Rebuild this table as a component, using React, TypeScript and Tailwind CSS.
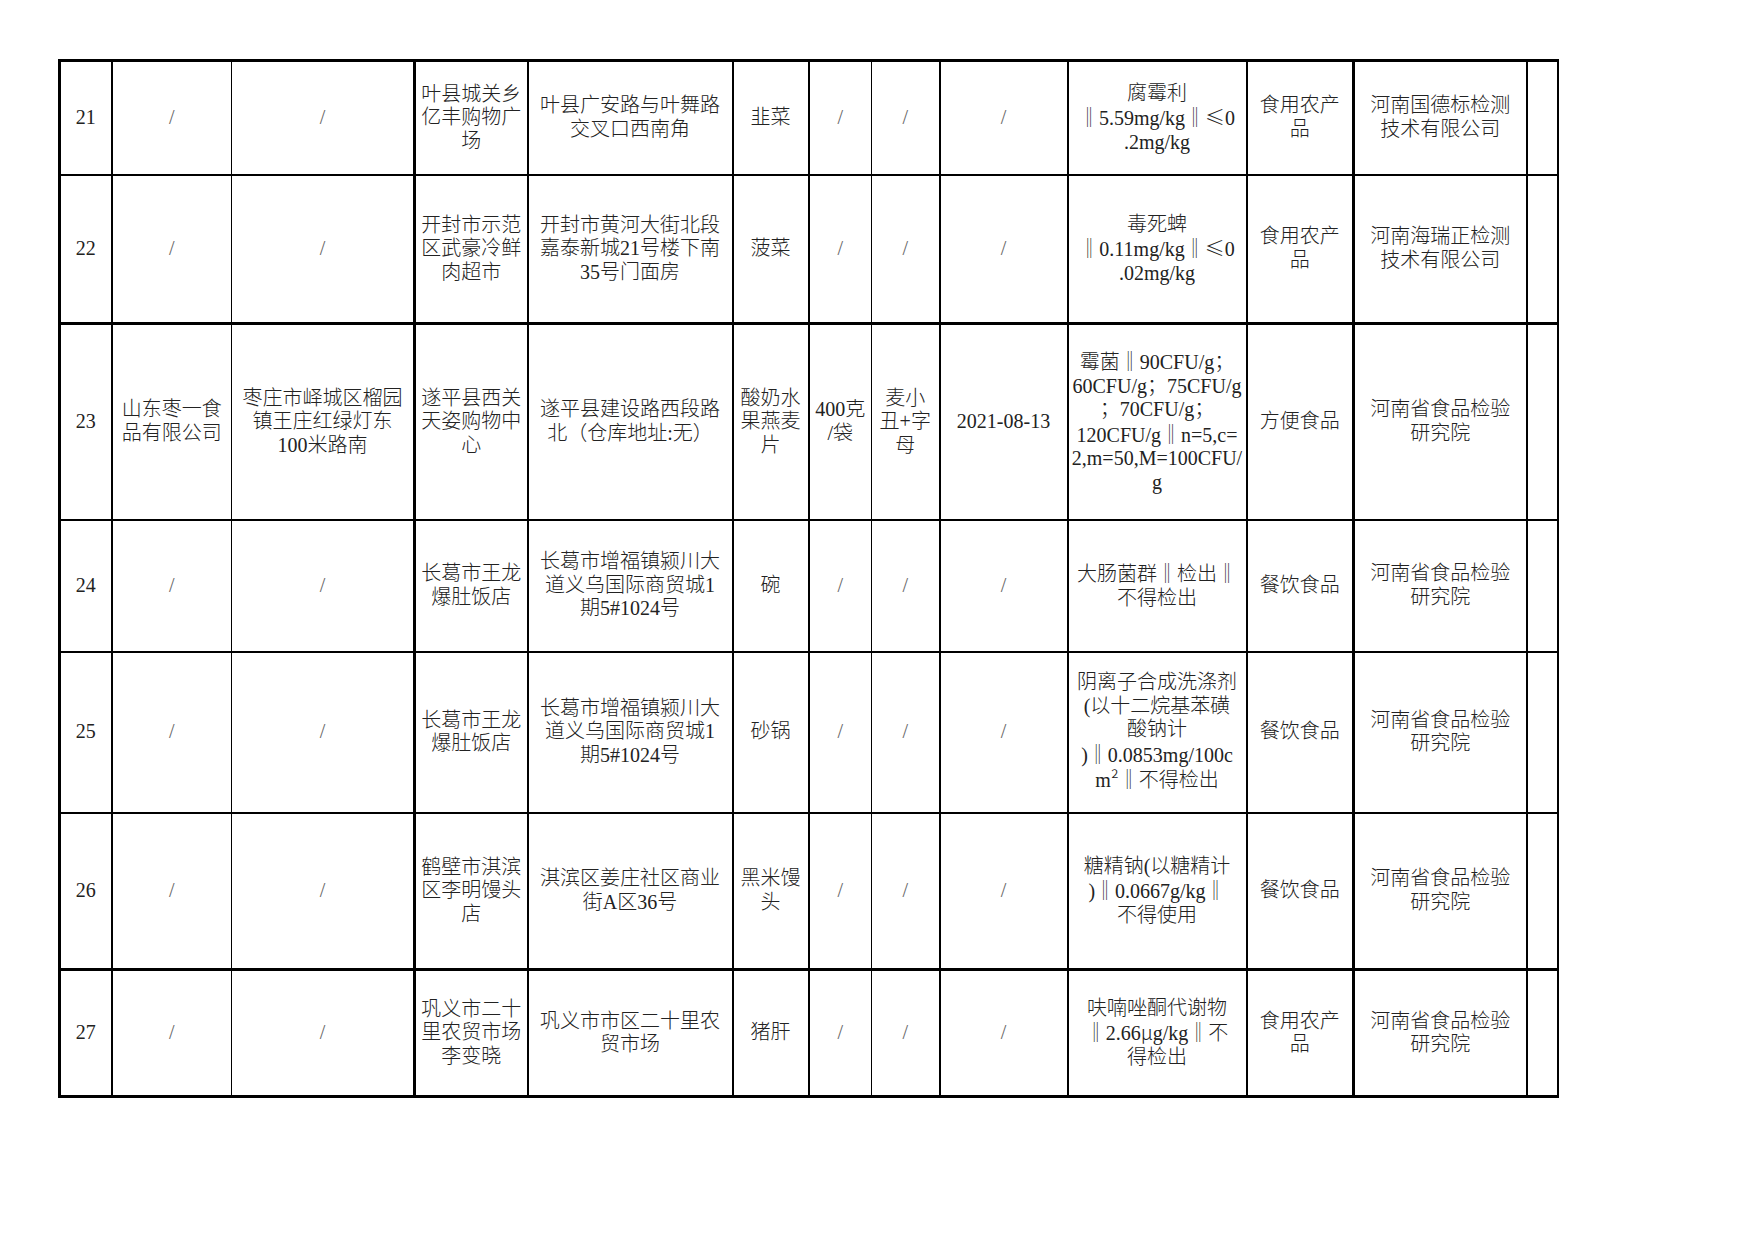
const COL_W = [
  "w-[52px]",
  "w-[120px]",
  "w-[183px]",
  "w-[113px]",
  "w-[205px]",
  "w-[76px]",
  "w-[63px]",
  "w-[68px]",
  "w-[128px]",
  "w-[179px]",
  "w-[107px]",
  "w-[173px]",
  "w-[31px]",
]

// left border of each column (the line before it)
const COL_L = [
  "border-l-[3px]",
  "border-l-2",
  "border-l",
  "border-l-[3px]",
  "border-l-2",
  "border-l-2",
  "border-l-2",
  "border-l",
  "border-l-2",
  "border-l-2",
  "border-l-2",
  "border-l-[3px]",
  "border-l-2",
]

type Row = {
  h: string
  top: string
  cells: string[][]
}

const rows: Row[] = [
  {
    h: "h-[114px]",
    top: "border-t-[3px]",
    cells: [
      ["21"],
      ["/"],
      ["/"],
      ["叶县城关乡", "亿丰购物广", "场"],
      ["叶县广安路与叶舞路", "交叉口西南角"],
      ["韭菜"],
      ["/"],
      ["/"],
      ["/"],
      ["腐霉利", "‖5.59mg/kg‖≤0", ".2mg/kg"],
      ["食用农产", "品"],
      ["河南国德标检测", "技术有限公司"],
      [],
    ],
  },
  {
    h: "h-[149px]",
    top: "border-t-2",
    cells: [
      ["22"],
      ["/"],
      ["/"],
      ["开封市示范", "区武豪冷鲜", "肉超市"],
      ["开封市黄河大街北段", "嘉泰新城21号楼下南", "35号门面房"],
      ["菠菜"],
      ["/"],
      ["/"],
      ["/"],
      ["毒死蜱", "‖0.11mg/kg‖≤0", ".02mg/kg"],
      ["食用农产", "品"],
      ["河南海瑞正检测", "技术有限公司"],
      [],
    ],
  },
  {
    h: "h-[196px]",
    top: "border-t-[3px]",
    cells: [
      ["23"],
      ["山东枣一食", "品有限公司"],
      ["枣庄市峄城区榴园", "镇王庄红绿灯东", "100米路南"],
      ["遂平县西关", "天姿购物中", "心"],
      ["遂平县建设路西段路", "北（仓库地址:无）"],
      ["酸奶水", "果燕麦", "片"],
      ["400克", "/袋"],
      ["麦小", "丑+字", "母"],
      ["2021-08-13"],
      [
        "霉菌‖90CFU/g；",
        "60CFU/g；75CFU/g",
        "；70CFU/g；",
        "120CFU/g‖n=5,c=",
        "2,m=50,M=100CFU/",
        "g",
      ],
      ["方便食品"],
      ["河南省食品检验", "研究院"],
      [],
    ],
  },
  {
    h: "h-[132px]",
    top: "border-t-2",
    cells: [
      ["24"],
      ["/"],
      ["/"],
      ["长葛市王龙", "爆肚饭店"],
      ["长葛市增福镇颍川大", "道义乌国际商贸城1", "期5#1024号"],
      ["碗"],
      ["/"],
      ["/"],
      ["/"],
      ["大肠菌群‖检出‖", "不得检出"],
      ["餐饮食品"],
      ["河南省食品检验", "研究院"],
      [],
    ],
  },
  {
    h: "h-[161px]",
    top: "border-t-2",
    cells: [
      ["25"],
      ["/"],
      ["/"],
      ["长葛市王龙", "爆肚饭店"],
      ["长葛市增福镇颍川大", "道义乌国际商贸城1", "期5#1024号"],
      ["砂锅"],
      ["/"],
      ["/"],
      ["/"],
      ["阴离子合成洗涤剂", "(以十二烷基苯磺", "酸钠计", ")‖0.0853mg/100c", "m²‖不得检出"],
      ["餐饮食品"],
      ["河南省食品检验", "研究院"],
      [],
    ],
  },
  {
    h: "h-[157px]",
    top: "border-t-2",
    cells: [
      ["26"],
      ["/"],
      ["/"],
      ["鹤壁市淇滨", "区李明馒头", "店"],
      ["淇滨区姜庄社区商业", "街A区36号"],
      ["黑米馒", "头"],
      ["/"],
      ["/"],
      ["/"],
      ["糖精钠(以糖精计", ")‖0.0667g/kg‖", "不得使用"],
      ["餐饮食品"],
      ["河南省食品检验", "研究院"],
      [],
    ],
  },
  {
    h: "h-[127px]",
    top: "border-t-[3px]",
    cells: [
      ["27"],
      ["/"],
      ["/"],
      ["巩义市二十", "里农贸市场", "李变晓"],
      ["巩义市市区二十里农", "贸市场"],
      ["猪肝"],
      ["/"],
      ["/"],
      ["/"],
      ["呋喃唑酮代谢物", "‖2.66μg/kg‖不", "得检出"],
      ["食用农产", "品"],
      ["河南省食品检验", "研究院"],
      [],
    ],
  },
]

// symbols that are full width in the sheet's font
const WIDE = "‖≤μ²"

function Line({ text }: { text: string }) {
  const parts: { t: string; wide: boolean }[] = []
  for (const ch of text) {
    const wide = WIDE.includes(ch)
    const last = parts[parts.length - 1]
    if (last && last.wide === wide) last.t += ch
    else parts.push({ t: ch, wide })
  }
  return (
    <div className={text === "/" ? "text-[#666]" : ""}>
      {parts.map((p, i) =>
        p.wide ? (
          <span key={i} className="font-['Noto_Sans_CJK_SC',sans-serif]">
            {p.t}
          </span>
        ) : (
          <span key={i}>{p.t}</span>
        )
      )}
    </div>
  )
}

export default function App() {
  return (
    <div className="min-h-screen bg-white pt-[59px] pl-[58px] font-['Liberation_Serif','Noto_Sans_CJK_SC',serif] text-[#222]">
      <table className="border-collapse table-fixed w-[1500px]">
        <colgroup>
          {COL_W.map((w, i) => (
            <col key={i} className={w} />
          ))}
        </colgroup>
        <tbody>
          {rows.map((row, ri) => (
            <tr key={ri} className={row.h}>
              {row.cells.map((lines, ci) => (
                <td
                  key={ci}
                  className={[
                    "border-black p-0 text-center align-middle whitespace-nowrap text-[20px] leading-[23.5px] font-light",
                    COL_L[ci],
                    row.top,
                    ci === 12 ? "border-r-2" : "",
                    ri === rows.length - 1 ? "border-b-[3px]" : "",
                  ].join(" ")}
                >
                  {lines.map((l, li) => (
                    <Line key={li} text={l} />
                  ))}
                </td>
              ))}
            </tr>
          ))}
        </tbody>
      </table>
    </div>
  )
}
